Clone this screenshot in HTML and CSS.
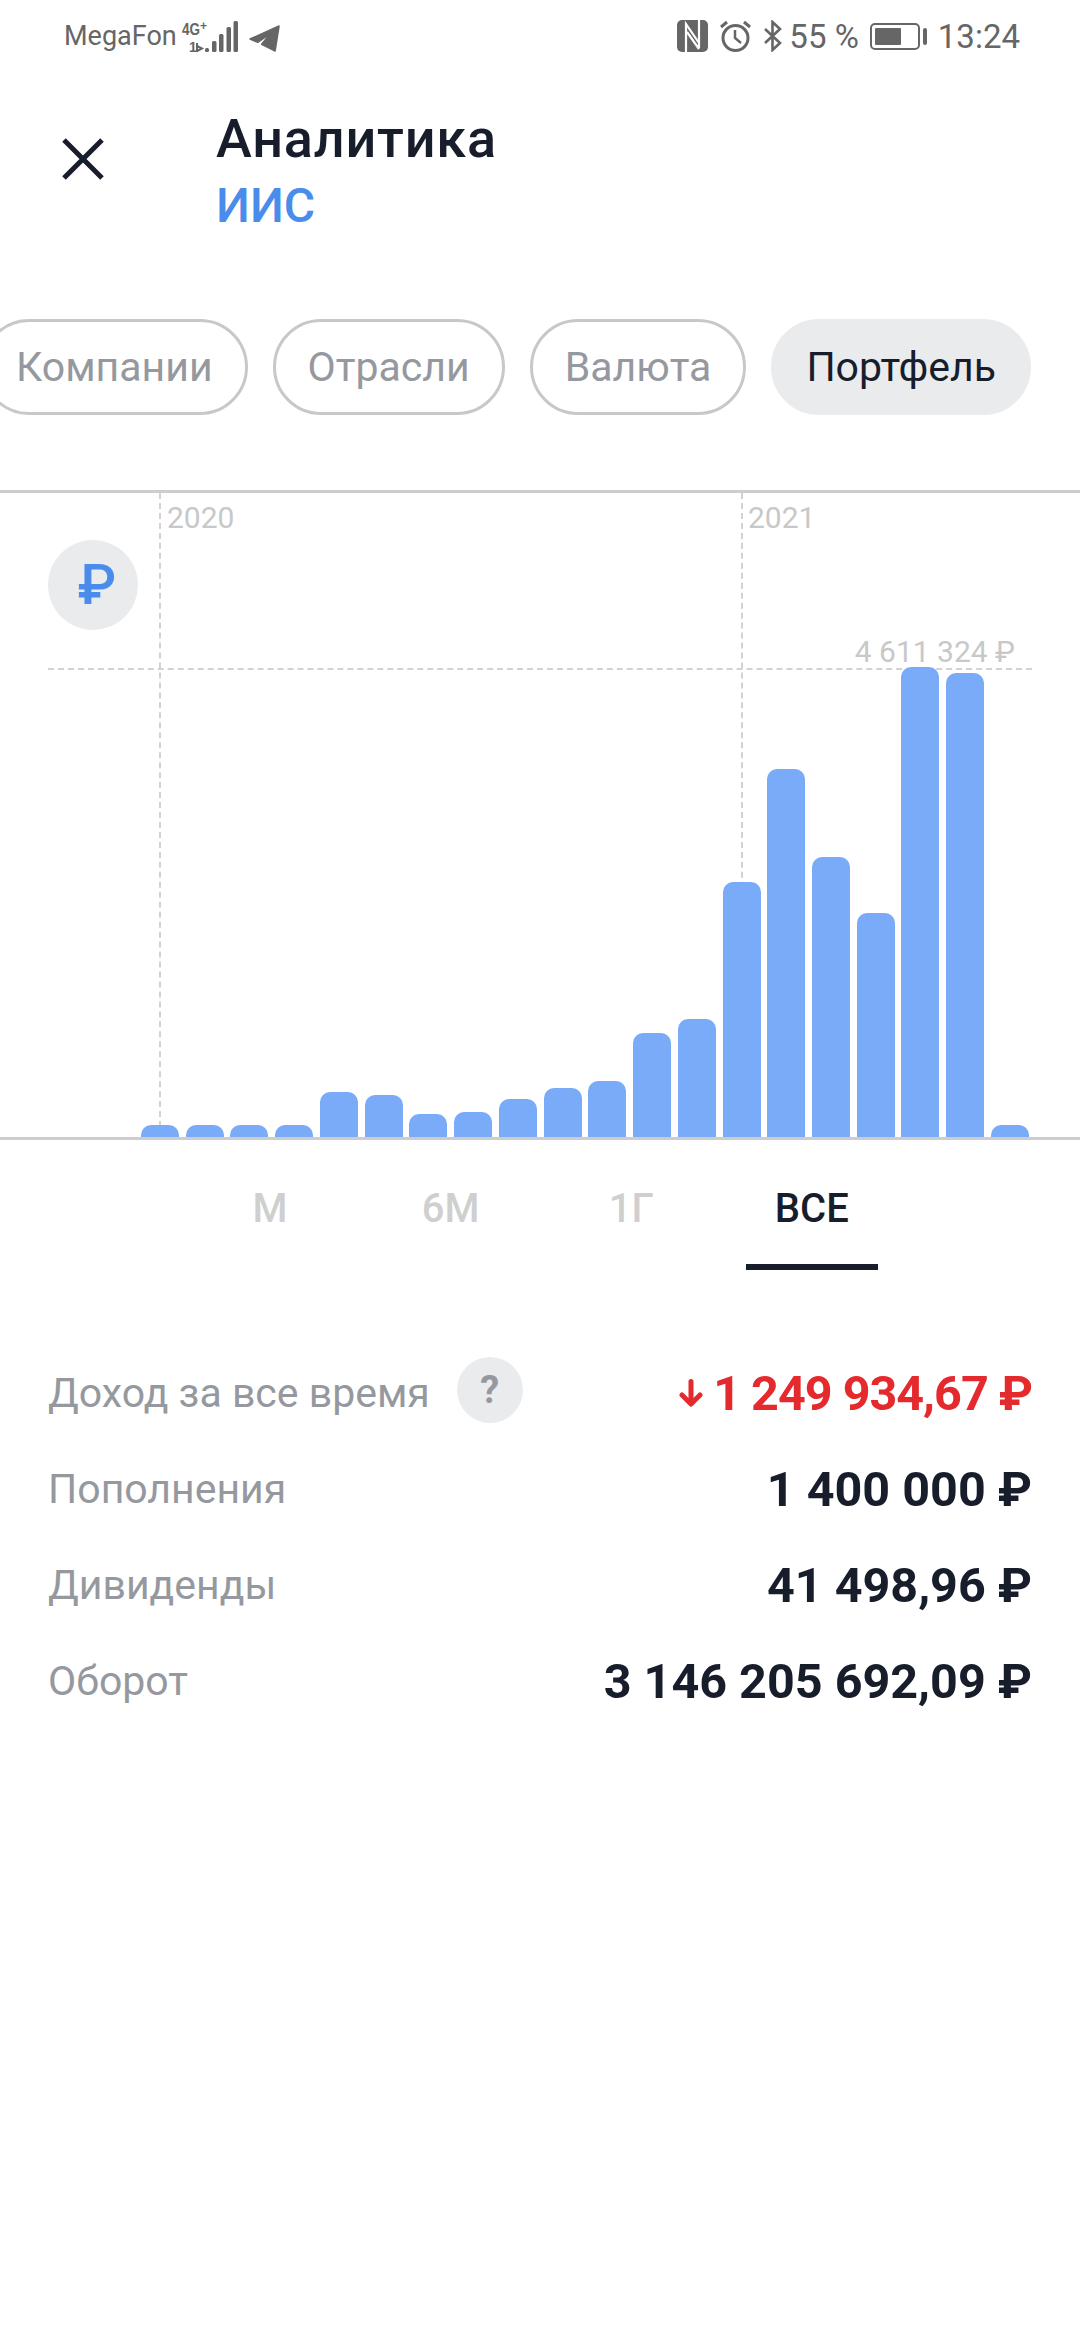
FILE: index.html
```html
<!DOCTYPE html>
<html lang="ru">
<head>
<meta charset="utf-8">
<title>Аналитика</title>
<link rel="stylesheet" href="styles.css">
</head>
<body>
<div class="status">
  <div class="status-left">
    <span class="carrier">MegaFon</span>
    <svg class="signal" width="56" height="34" viewBox="0 0 56 34">
      <text x="0" y="15" class="net" textLength="18" lengthAdjust="spacingAndGlyphs">4G</text><text x="18" y="10" class="net-s">+</text>
      <text x="7" y="32" class="net-b">1</text>
      <path d="M15 23v9M15 26l5 2.500-5 2.500" fill="none" stroke="#666" stroke-width="2"/>
      <rect x="23" y="28" width="4" height="4" rx="1.500" fill="#666"/>
      <rect x="30" y="21" width="4.500" height="11" rx="1.500" fill="#666"/>
      <rect x="37" y="14" width="4.500" height="18" rx="1.500" fill="#666"/>
      <rect x="44.500" y="7" width="4.500" height="25" rx="1.500" fill="#666"/>
      <rect x="51.500" y="1" width="4.500" height="31" rx="1.500" fill="#666"/>
    </svg>
    <svg class="tg" width="31" height="27" viewBox="0 0 32 28"><path d="M31 1 1 14.500 9 18 22 9 13 20 27 27 31 2Z" fill="#666" stroke="#666" stroke-linejoin="round" stroke-width="1.500"/></svg>
  </div>
  <div class="status-right">
    <svg width="31" height="32" viewBox="0 0 31 32"><rect width="31" height="32" rx="5" fill="#666"/><path d="M9 32V4L22 23M10 12l12 17M22 0v28" fill="none" stroke="#fff" stroke-width="2.200"/></svg>
    <svg class="ml" width="31" height="32" viewBox="0 0 31 32"><circle cx="15.500" cy="18" r="12.500" fill="none" stroke="#666" stroke-width="3"/><path d="M15 10v8l6 5" fill="none" stroke="#666" stroke-width="2.500"/><path d="M1 7l6-5M30 7l-6-5" stroke="#666" stroke-width="3"/></svg>
    <svg class="ml" width="20" height="32" viewBox="0 0 20 32"><path d="M2 9l15 14-7.500 7V2L17 9 2 23" fill="none" stroke="#666" stroke-width="2.600"/></svg>
    <span class="pct">55 %</span>
    <span class="battery"><span class="battery-fill"></span></span>
    <span class="battery-tip"></span>
    <span class="clock">13:24</span>
  </div>
</div>

<header class="head">
  <svg class="close" width="42" height="42" viewBox="0 0 42 42"><path d="M2 2l38 38M40 2 2 40" stroke="#171d2b" stroke-width="5" fill="none"/></svg>
  <div class="titles">
    <h1 class="title">Аналитика</h1>
    <div class="subtitle">ИИС</div>
  </div>
</header>

<nav class="chips">
  <span class="chip">Компании</span>
  <span class="chip">Отрасли</span>
  <span class="chip">Валюта</span>
  <span class="chip chip-on">Портфель</span>
</nav>

<section class="chart">
  <span class="vline vline-a"></span>
  <span class="vline vline-b"></span>
  <span class="year year-a">2020</span>
  <span class="year year-b">2021</span>
  <span class="hline"></span>
  <span class="maxval">4 611 324 ₽</span>
  <span class="cur">₽</span>
  <div class="bars">
    <i class="bar" style="height:12px"></i>
    <i class="bar" style="height:12px"></i>
    <i class="bar" style="height:12px"></i>
    <i class="bar" style="height:12px"></i>
    <i class="bar" style="height:45px"></i>
    <i class="bar" style="height:42px"></i>
    <i class="bar" style="height:23px"></i>
    <i class="bar" style="height:25px"></i>
    <i class="bar" style="height:38px"></i>
    <i class="bar" style="height:49px"></i>
    <i class="bar" style="height:56px"></i>
    <i class="bar" style="height:104px"></i>
    <i class="bar" style="height:118px"></i>
    <i class="bar" style="height:255px"></i>
    <i class="bar" style="height:368px"></i>
    <i class="bar" style="height:280px"></i>
    <i class="bar" style="height:224px"></i>
    <i class="bar" style="height:470px"></i>
    <i class="bar" style="height:464px"></i>
    <i class="bar" style="height:12px"></i>
  </div>
</section>

<div class="tabs">
  <span class="tab">М</span>
  <span class="tab">6М</span>
  <span class="tab">1Г</span>
  <span class="tab tab-on">ВСЕ</span>
</div>

<section class="stats">
  <div class="row">
    <div class="label">Доход за все время<span class="help">?</span></div>
    <div class="value value-red"><svg class="arrow" width="24" height="28" viewBox="0 0 24 28"><path d="M12 2.500v22M3 16l9 9 9-9" fill="none" stroke="#e52a2e" stroke-width="5" stroke-linecap="round" stroke-linejoin="round"/></svg>1 249 934,67 ₽</div>
  </div>
  <div class="row">
    <div class="label">Пополнения</div>
    <div class="value">1 400 000 ₽</div>
  </div>
  <div class="row">
    <div class="label">Дивиденды</div>
    <div class="value">41 498,96 ₽</div>
  </div>
  <div class="row">
    <div class="label">Оборот</div>
    <div class="value">3 146 205 692,09 ₽</div>
  </div>
</section>
</body>
</html>
```
FILE: styles.css
```css
* { box-sizing: border-box; }
html, body { margin: 0; padding: 0; background: #fff; }
body { width: 1080px; height: 2340px; overflow: hidden; font-family: Roboto, "Noto Sans", sans-serif; color: #171d2b; }

.status { height: 72px; padding: 0 60px 0 64px; display: flex; justify-content: space-between; align-items: center; color: #666; font-family: Roboto, sans-serif; }
.status-left, .status-right { display: flex; align-items: center; }
.carrier { font-size: 27px; }
.signal { margin-left: 5px; margin-top: 2px; overflow: visible; }
.net { font: 700 16px "Liberation Sans", sans-serif; fill: #666; }
.net-s { font: 700 12px "Liberation Sans", sans-serif; fill: #666; }
.net-b { font: 700 14px "Liberation Sans", sans-serif; fill: #666; }
.tg { margin-left: 11px; margin-top: 5px; }
.ml { margin-left: 12px; }
.pct { font-size: 33px; margin-left: 6px; }
.clock { font-size: 33px; margin-left: 11px; }
.battery { margin-left: 11px; width: 50px; height: 27px; border: 2px solid #666; border-radius: 5px; padding: 3px; display: flex; }
.battery-fill { width: 26px; background: #666; border-radius: 1px; }
.battery-tip { margin-left: 3px; width: 4px; height: 17px; background: #666; border-radius: 2px; }

.head { height: 247px; display: flex; padding: 0 0 0 62px; }
.close { margin-top: 66px; flex: none; }
.titles { margin-left: 112px; padding-top: 37px; }
.title { margin: 0; font-size: 54px; font-weight: 500; line-height: 60px; letter-spacing: 0.8px; }
.subtitle { color: #4a8cec; font-size: 48px; font-weight: 500; line-height: 60px; margin-top: 7px; }

.chips { height: 96px; display: flex; justify-content: flex-end; gap: 25px; padding-right: 49px; overflow: hidden; }
.chip { flex: none; height: 96px; display: flex; align-items: center; padding: 0 32px; border: 3px solid #c8c8c8; border-radius: 48px; font-size: 41px; color: #95999f; }
.chip-on { background: #e9ebed; border-color: #e9ebed; color: #171d2b; }

.chart { position: relative; height: 650px; margin-top: 75px; border-top: 3px solid #cdcdcd; border-bottom: 3px solid #cdcdcd; }
.vline { position: absolute; top: 0; bottom: 0; border-left: 2px dashed #d2d2d2; }
.vline-a { left: 159px; }
.vline-b { left: 741px; }
.year { position: absolute; top: 7px; font: 30px/36px Roboto, sans-serif; color: #c8c8c8; }
.year-a { left: 167px; }
.year-b { left: 748px; }
.hline { position: absolute; left: 48px; width: 984px; top: 175px; border-top: 2px dashed #d2d2d2; }
.maxval { position: absolute; right: 65px; top: 141px; font: 30px/36px Roboto, sans-serif; color: #c8c8c8; }
.cur { position: absolute; left: 48px; top: 47px; width: 90px; height: 90px; padding-left: 8px; border-radius: 50%; background: #e9ebed; color: #4a8cec; font-size: 56px; font-weight: 500; display: flex; align-items: center; justify-content: center; }
.bars { position: absolute; left: 141px; bottom: 0; display: flex; align-items: flex-end; gap: 6.740px; }
.bar { display: block; width: 38px; background: #7aabf9; border-radius: 10px 10px 0 0; }

.tabs { display: flex; gap: 48.600px; padding: 45px 0 0 204px; }
.tab { width: 132px; height: 85px; text-align: center; font-size: 40px; line-height: 48px; font-weight: 500; color: #cfcfcf; }
.tab-on { color: #171d2b; border-bottom: 6px solid #171d2b; }

.stats { padding: 75px 48px 0; }
.row { height: 96px; display: flex; justify-content: space-between; align-items: center; }
.label { display: flex; align-items: center; font-size: 41px; color: #95999f; }
.help { margin: -6px 0 0 27px; width: 66px; height: 66px; border-radius: 50%; background: #e9ebed; display: flex; align-items: center; justify-content: center; font-size: 38px; font-weight: 700; }
.value { display: flex; align-items: center; font-size: 48.500px; font-weight: 700; white-space: pre; }
.value-red { color: #e52a2e; letter-spacing: -1px; }
.arrow { margin-right: 10px; }
```
